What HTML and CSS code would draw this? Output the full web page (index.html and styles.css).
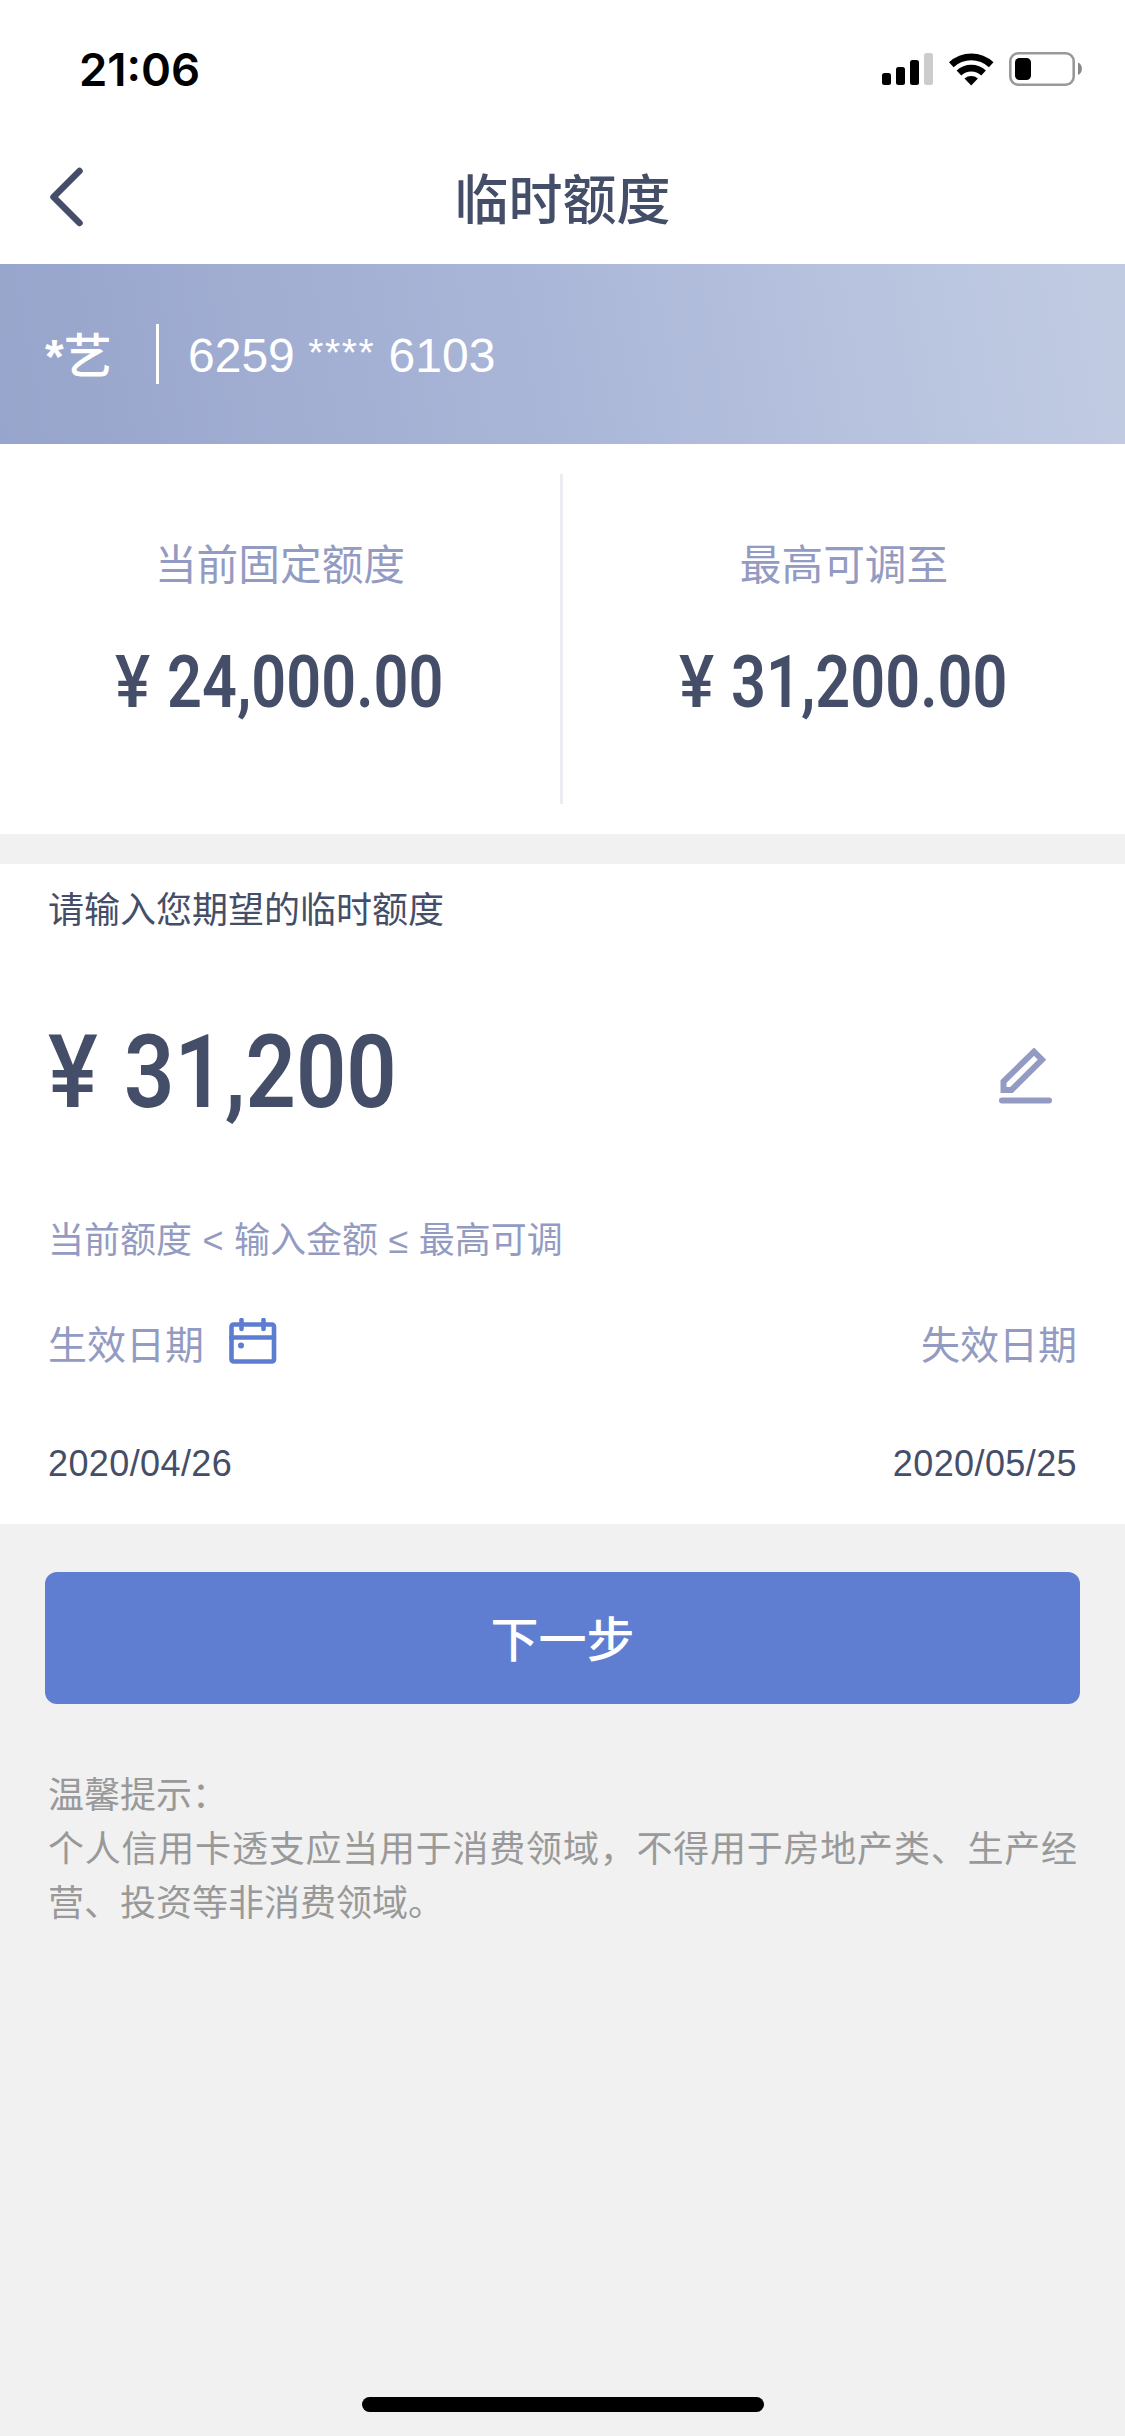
FILE: index.html
```html
<!DOCTYPE html>
<html lang="zh-CN">
<head>
<meta charset="utf-8">
<title>临时额度</title>
<link rel="stylesheet" href="styles.css">
</head>
<body>
<div class="screen">
  <div class="status">
    <span class="time">21:06</span>
    <svg class="status-icons" width="200" height="34" viewBox="0 0 200 34">
      <rect x="0" y="21" width="9" height="12" rx="2.5"/>
      <rect x="14" y="15" width="9" height="18" rx="2.5"/>
      <rect x="28" y="8" width="9" height="25" rx="2.5"/>
      <rect x="42" y="1" width="9" height="32" rx="2.5" fill="#ccc"/>
      <path d="M67 10.200a32.500 32.500 0 0 1 44.500 0l-4.600 5.100a25.700 25.700 0 0 0-35.300 0z"/>
      <path d="M74.600 18.500a21.500 21.500 0 0 1 29.300 0l-4.700 5a14.500 14.500 0 0 0-19.900 0z"/>
      <path d="M89.200 33.500l-6.700-7a10.500 10.500 0 0 1 13.400 0z"/>
      <rect x="128.300" y="1.300" width="63.400" height="31.400" rx="8" fill="none" stroke="#999" stroke-width="2.600"/>
      <rect x="133" y="6" width="16" height="22" rx="4.500"/>
      <path d="M196 10.500v12.500c5.200-2 5.200-10.500 0-12.500z" fill="#888"/>
    </svg>
  </div>
  <div class="nav">
    <svg class="back" width="34" height="60" viewBox="0 0 34 60"><path d="M30.500 4L4.500 30L30.500 56"/></svg>
    <h1 class="title">临时额度</h1>
  </div>
  <div class="card-bar">
    <span class="name"><b>*</b>艺</span>
    <span class="card-no">6259 <span class="mask">****</span> 6103</span>
  </div>
  <div class="limits">
    <div class="limit">
      <div class="limit-label">当前固定额度</div>
      <div class="money"><span class="yen">¥</span><span class="digits">24,000.00</span></div>
    </div>
    <div class="limit">
      <div class="limit-label">最高可调至</div>
      <div class="money"><span class="yen">¥</span><span class="digits">31,200.00</span></div>
    </div>
  </div>
  <div class="form">
    <div class="prompt">请输入您期望的临时额度</div>
    <div class="amount-row">
      <div class="money money-lg"><span class="yen">¥</span><span class="digits">31,200</span></div>
      <svg class="edit" width="55" height="56" viewBox="0 0 55 56">
        <path d="M4.500 42V33.500L35 3.700L43 11.700L12.500 42Z"/>
        <path d="M3 52.500H50" stroke-linecap="round"/>
      </svg>
    </div>
    <div class="hint">当前额度 &lt; 输入金额 ≤ 最高可调</div>
    <div class="date-row labels">
      <span class="with-icon">生效日期
        <svg class="calendar" width="48" height="46" viewBox="0 0 48 46">
          <rect x="2.500" y="6.500" width="42.500" height="37" rx="2"/>
          <path d="M2 19.500H45M12.500 2V11M34.500 2V11" stroke-linecap="round"/>
          <circle cx="12" cy="27.500" r="3"/>
        </svg>
      </span>
      <span>失效日期</span>
    </div>
    <div class="date-row dates"><span>2020/04/26</span><span>2020/05/25</span></div>
  </div>
  <button class="next">下一步</button>
  <div class="tips">
    <p>温馨提示：</p>
    <p>个人信用卡透支应当用于消费领域，不得用于房地产类、生产经营、投资等非消费领域。</p>
  </div>
  <div class="home-bar"></div>
</div>
</body>
</html>
```
FILE: styles.css
```css
* { box-sizing: border-box; }
body {
  margin: 0;
  font-family: "Liberation Sans", "Noto Sans CJK SC", sans-serif;
  color: #454e68;
}
p, h1 { margin: 0; }
svg { display: block; }
.screen {
  width: 1125px;
  height: 2436px;
  display: flex;
  flex-direction: column;
  background: #f1f1f1;
}
.status {
  height: 132px;
  padding: 52px 43px 0 79px;
  display: flex;
  justify-content: space-between;
  background: #fff;
}
.time {
  font: 600 45.5px/35px Inter, sans-serif;
  color: #000;
}
.nav {
  height: 132px;
  padding: 35px 49px 0;
  display: grid;
  grid-template-columns: 34px 1fr 34px;
  background: #fff;
}
.back path { fill: none; stroke: #454e68; stroke-width: 6.5; stroke-linecap: round; stroke-linejoin: round; }
.title { padding-top: 2px; font-size: 54px; font-weight: 500; line-height: 64px; text-align: center; }
.card-bar {
  height: 180px;
  padding: 0 45px;
  display: flex;
  align-items: center;
  background: linear-gradient(80deg, #97a4cb 0%, #abb7d8 50%, #bac5e0 82%, #c1cbe2 100%);
  color: #fff;
  font-size: 48px;
}
.name { width: 114px; height: 60px; border-right: 3px solid #fff; font-weight: 500; line-height: 66px; }
.card-no { padding: 3px 0 0 29px; line-height: 60px; }
.mask { font-size: 39px; letter-spacing: 1.6px; line-height: 0; vertical-align: 6px; }
.limits {
  height: 390px;
  padding: 30px 0;
  display: grid;
  grid-template-columns: 563px 1fr;
  background: #fff;
}
.limit { display: flex; flex-direction: column; align-items: center; padding-top: 62px; }
.limit:first-child { border-right: 3px solid #ebecf4; }
.limit-label { font-size: 41.7px; line-height: 60px; color: #939bc2; }
.money {
  display: flex;
  width: 330px;
  margin-top: 45px;
  font: 600 72px/84px Roboto, sans-serif;
  white-space: nowrap;
}
.yen, .digits { display: block; transform: scaleX(.85); transform-origin: 0 50%; }
.yen { width: 52px; font-weight: 500; transform: scaleX(.92); }
.digits { width: 278px; }
.form {
  height: 660px;
  margin-top: 30px;
  padding: 20px 48px 0;
  background: #fff;
}
.prompt { font-size: 36px; line-height: 54px; }
.amount-row { display: flex; justify-content: space-between; align-items: flex-start; padding: 74px 23px 0 0; height: 276px; }
.money-lg { width: 400px; margin: 0; font-size: 102px; line-height: 120px; }
.money-lg .yen { width: 76px; }
.money-lg .digits { transform: scaleX(.865); }
.edit { margin-top: 36px; fill: none; stroke: #939bc2; stroke-width: 6; }
.hint { font-size: 36px; line-height: 54px; word-spacing: .5px; color: #939bc2; }
.date-row { display: flex; justify-content: space-between; }
.labels { margin-top: 48px; font-size: 39px; line-height: 60px; color: #939bc2; }
.with-icon { display: flex; gap: 25px; }
.calendar { margin-top: 2px; fill: none; stroke: #5d7dd0; stroke-width: 4.6; }
.calendar circle { fill: #5d7dd0; stroke: none; }
.dates { margin-top: 61px; font-size: 36px; line-height: 54px; letter-spacing: .4px; }
.next {
  margin: 48px 45px 0;
  padding: 0 0 4px;
  height: 132px;
  border: 0;
  border-radius: 12px;
  background: #5f7ed1;
  color: #fff;
  font: 500 48px/60px "Noto Sans CJK SC", sans-serif;
}
.tips {
  margin: 65px 48px 0;
  font-size: 36px;
  line-height: 54px;
  color: #999;
  text-align: justify;
}
.home-bar {
  width: 402px;
  height: 15px;
  margin: auto auto 24px;
  border-radius: 8px;
  background: #000;
}
```
